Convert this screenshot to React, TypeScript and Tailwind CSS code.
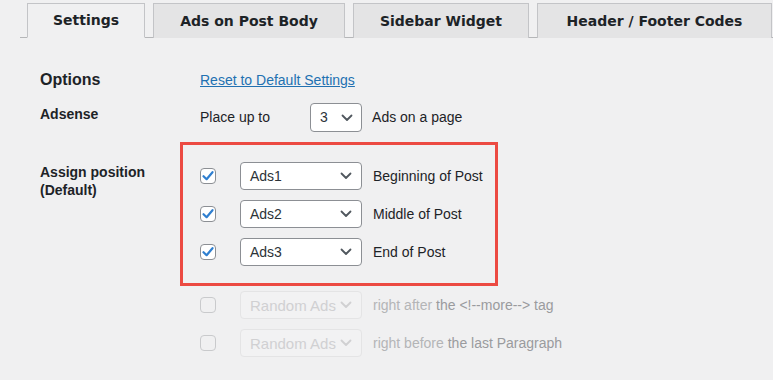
import React from "react";

const Chevron = ({ color = "#50575e" }: { color?: string }) => (
  <svg width="12" height="8" viewBox="0 0 12 8" fill="none">
    <path d="M1.5 1.5 L6 6 L10.5 1.5" stroke={color} strokeWidth="1.8" strokeLinecap="round" strokeLinejoin="round" />
  </svg>
);

const Check = ({ checked, disabled }: { checked?: boolean; disabled?: boolean }) => (
  <div
    className={
      "w-4 h-4 rounded-[4px] border flex items-center justify-center shrink-0 " +
      (disabled ? "border-[#c9cacc] bg-[#f0f0f1]" : "border-[#8c8f94] bg-white")
    }
  >
    {checked && (
      <svg width="14" height="14" viewBox="0 0 14 14" fill="none">
        <path d="M2.5 7.2 L5.6 10.2 L11.5 3.2" stroke="#2f7fd0" strokeWidth="2.2" strokeLinecap="round" strokeLinejoin="round" />
      </svg>
    )}
  </div>
);

const Select = ({ value, disabled }: { value: string; disabled?: boolean }) => (
  <div
    className={
      "w-[122px] h-[28px] rounded-[4px] border flex items-center justify-between pl-[9px] pr-[9px] shrink-0 " +
      (disabled ? "border-[#e4e4e5] bg-[#f2f2f3] text-[#d0d0d2] text-[15px]" : "border-[#8c8f94] bg-white text-[#2c3338] text-[14px]")
    }
  >
    <span className="whitespace-nowrap leading-none">{value}</span>
    <Chevron color={disabled ? "#d0d0d2" : "#50575e"} />
  </div>
);

const Row = ({ value, label }: { value: string; label: string }) => (
  <div className="flex items-center h-[28px]">
    <Check checked />
    <div className="ml-[24px]">
      <Select value={value} />
    </div>
    <span className="ml-[11px] text-[14px] text-[#1d2327] whitespace-nowrap">{label}</span>
  </div>
);

const DisabledRow = ({ a, b }: { a: string; b: string }) => (
  <div className="flex items-center h-[28px]">
    <Check disabled />
    <div className="ml-[24px]">
      <Select value="Random Ads" disabled />
    </div>
    <span className="ml-[11px] text-[14px] whitespace-nowrap">
      <span className="text-[#b4b5b7]">{a}</span>
      <span className="text-[#9a9b9e]">{b}</span>
    </span>
  </div>
);

export default function App() {
  const tabs = ["Settings", "Ads on Post Body", "Sidebar Widget", "Header / Footer Codes"];
  return (
    <div
      className="w-[773px] h-[380px] bg-[#f0f0f1] overflow-hidden text-[#1d2327]"
      style={{ fontFamily: '"Liberation Sans", Arial, sans-serif' }}
    >
      <div className="pt-[3px] pl-[20px]">
        <div className="flex border-b border-[#b5b6b8] pl-[7px] gap-[8px] h-[35px]">
          {tabs.map((t, i) => (
            <div
              key={t}
              className={
                "h-[35px] px-[26px] flex items-center border border-[#c3c4c7] text-[14px] font-bold whitespace-nowrap " +
                (i === 0 ? "bg-[#f0f0f1] border-b-[#f0f0f1] border-[#b5b6b8] w-[118px] justify-center" : "bg-[#e4e4e5] border-b-0 h-[34px] justify-center") +
                (i === 1 ? " w-[192px]" : "") +
                (i === 2 ? " w-[176px]" : "") +
                (i === 3 ? " w-[235px]" : "")
              }
              style={{ fontFamily: '"DejaVu Sans", Verdana, sans-serif' }}
            >
              {t}
            </div>
          ))}
        </div>
      </div>

      <div className="pl-[40px]">
        <div className="flex mt-[32px] h-[20px] items-center">
          <div className="w-[160px] text-[16px] font-bold">Options</div>
          <a className="text-[14px] text-[#2271b1] underline">Reset to Default Settings</a>
        </div>

        <div className="flex mt-[13px] items-start">
          <div className="w-[160px] text-[14px] font-bold leading-5 pt-[1px]">Adsense</div>
          <div className="flex items-center h-[29px]">
            <span className="text-[14px]">Place up to</span>
            <div className="ml-[40px] w-[52px] h-[29px] rounded-[4px] border border-[#8c8f94] bg-white flex items-center justify-between pl-[9px] pr-[8px]">
              <span className="text-[14px] text-[#2c3338]">3</span>
              <Chevron />
            </div>
            <span className="ml-[10px] text-[14px]">Ads on a page</span>
          </div>
        </div>

        <div className="flex mt-[10px] items-start">
          <div className="w-[140px] text-[14px] font-bold leading-[18px] mt-[21px]">
            Assign position
            <br />
            (Default)
          </div>
          <div className="flex flex-col">
            <div className="w-[318px] border-[3px] border-[#ec4a42] pl-[17px] pt-[17px] pb-[17px] flex flex-col gap-[10px]">
              <Row value="Ads1" label="Beginning of Post" />
              <Row value="Ads2" label="Middle of Post" />
              <Row value="Ads3" label="End of Post" />
            </div>
            <div className="pl-[20px] mt-[5px] flex flex-col gap-[10px]">
              <DisabledRow a="right after " b="the <!--more--> tag" />
              <DisabledRow a="right before " b="the last Paragraph" />
            </div>
          </div>
        </div>
      </div>
    </div>
  );
}
